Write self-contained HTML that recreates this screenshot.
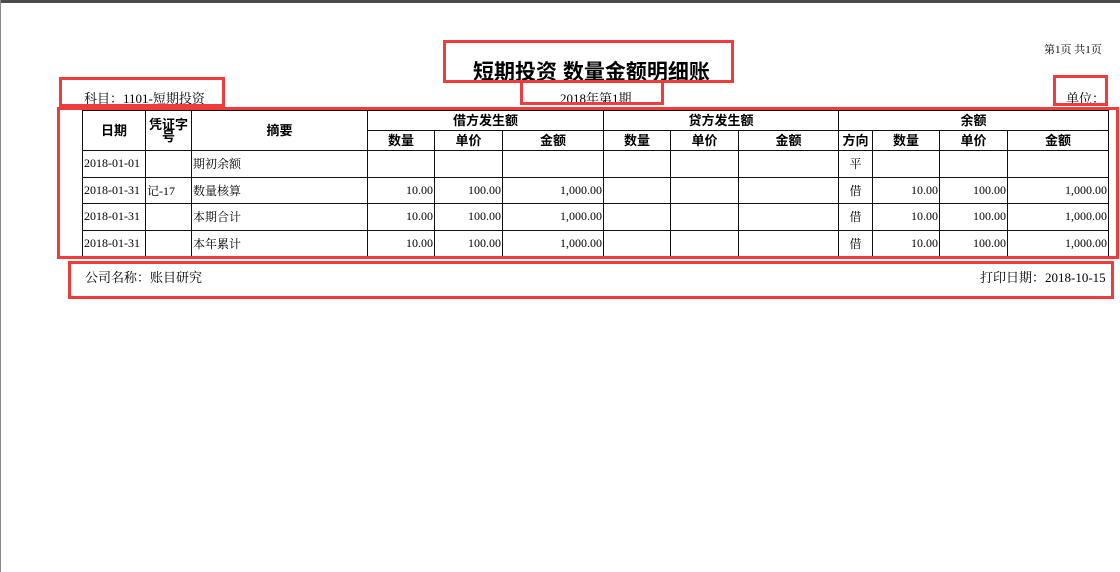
<!DOCTYPE html>
<html><head><meta charset="utf-8"><style>
body{margin:0;width:1120px;height:572px;background:#fff;position:relative;overflow:hidden;font-family:"Liberation Serif","Noto Serif CJK SC",serif;font-size:13px;color:#000}
.a{position:absolute;white-space:nowrap}
.r{position:absolute;border:3px solid #f03c3c;box-sizing:border-box}
table{position:absolute;left:82px;top:110px;border-collapse:collapse;table-layout:fixed}
td{border:1.5px solid #111;padding:0 1px;height:25px;font-size:12px;overflow:hidden;white-space:nowrap;box-sizing:border-box}
.d td{height:26.5px}
.h td{font-family:"Liberation Sans","Noto Sans CJK SC",sans-serif;font-weight:bold;font-size:13px;text-align:center;height:20px;line-height:14px;white-space:normal}
.n{text-align:right}
.c{text-align:center}
</style></head><body>
<div style="position:absolute;left:0;top:0;width:1120px;height:3px;background:#4b4b4b"></div>
<div style="position:absolute;left:0;top:0;width:1px;height:572px;background:#888"></div>
<div class="a" style="left:1044px;top:41px;font-size:11px">第1页 共1页</div>
<div class="a" style="left:473px;top:56px;font-family:'Liberation Sans','Noto Sans CJK SC',sans-serif;font-weight:bold;font-size:21px">短期投资 数量金额明细账</div>
<div class="a" style="left:84px;top:88px">科目：1101-短期投资</div>
<div class="a" style="left:560px;top:88px">2018年第1期</div>
<div class="a" style="left:1066px;top:88px">单位：</div>
<table>
<colgroup><col style="width:63px"><col style="width:46px"><col style="width:176px"><col style="width:67px"><col style="width:68px"><col style="width:101px"><col style="width:67px"><col style="width:68px"><col style="width:100px"><col style="width:34px"><col style="width:67px"><col style="width:68px"><col style="width:101px"></colgroup>
<tr class="h"><td rowspan="2" style="height:40px">日期</td><td rowspan="2" style="line-height:12px">凭证字号</td><td rowspan="2">摘要</td><td colspan="3">借方发生额</td><td colspan="3">贷方发生额</td><td colspan="4">余额</td></tr>
<tr class="h"><td>数量</td><td>单价</td><td>金额</td><td>数量</td><td>单价</td><td>金额</td><td style="padding:0">方向</td><td>数量</td><td>单价</td><td>金额</td></tr>
<tr class="d"><td>2018-01-01</td><td></td><td>期初余额</td><td></td><td></td><td></td><td></td><td></td><td></td><td class="c">平</td><td></td><td></td><td></td></tr>
<tr class="d"><td>2018-01-31</td><td>记-17</td><td>数量核算</td><td class="n">10.00</td><td class="n">100.00</td><td class="n">1,000.00</td><td></td><td></td><td></td><td class="c">借</td><td class="n">10.00</td><td class="n">100.00</td><td class="n">1,000.00</td></tr>
<tr class="d"><td>2018-01-31</td><td></td><td>本期合计</td><td class="n">10.00</td><td class="n">100.00</td><td class="n">1,000.00</td><td></td><td></td><td></td><td class="c">借</td><td class="n">10.00</td><td class="n">100.00</td><td class="n">1,000.00</td></tr>
<tr class="d"><td>2018-01-31</td><td></td><td>本年累计</td><td class="n">10.00</td><td class="n">100.00</td><td class="n">1,000.00</td><td></td><td></td><td></td><td class="c">借</td><td class="n">10.00</td><td class="n">100.00</td><td class="n">1,000.00</td></tr>
</table>
<div class="a" style="left:85px;top:267px">公司名称：账目研究</div>
<div class="a" style="left:980px;top:267px">打印日期：2018-10-15</div>
<div class="r" style="left:443px;top:40px;width:291px;height:43px"></div>
<div class="r" style="left:520px;top:80px;width:144px;height:25px"></div>
<div class="r" style="left:59px;top:77px;width:166px;height:30px"></div>
<div class="r" style="left:1053px;top:75px;width:55px;height:31px"></div>
<div class="r" style="left:57px;top:107px;width:1062px;height:152px"></div>
<div class="r" style="left:68px;top:261px;width:1046px;height:38px"></div>
</body></html>
